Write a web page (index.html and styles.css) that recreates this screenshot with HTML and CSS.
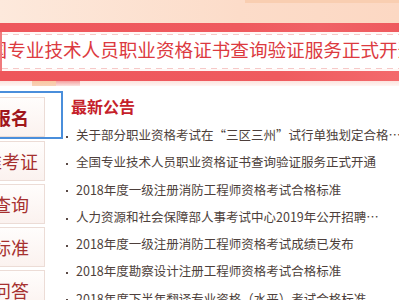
FILE: index.html
```html
<!DOCTYPE html>
<html lang="zh-CN">
<head>
<meta charset="utf-8">
<title>职业资格</title>
<link rel="stylesheet" href="styles.css">
</head>
<body>
<div class="banner">
  <div class="banner-top"></div>
  <div class="banner-band"></div>
  <div class="banner-strip">
    <div class="strip-inner">
      <div class="banner-title">全国专业技术人员职业资格证书查询验证服务正式开通</div>
    </div>
  </div>
  <div class="banner-band band-low"></div>
  <div class="banner-bottom"></div>
</div>
<div class="main">
  <div class="nav">
    <div class="focus">
      <div class="nav-box strong">报名</div>
    </div>
    <div class="nav-box first-after">准考证</div>
    <div class="nav-box">查询</div>
    <div class="nav-box">标准</div>
    <div class="nav-box">问答</div>
  </div>
  <div class="news">
    <h2 class="news-title">最新公告</h2>
    <ul class="news-list">
      <li>关于部分职业资格考试在“三区三州”试行单独划定合格…</li>
      <li>全国专业技术人员职业资格证书查询验证服务正式开通</li>
      <li>2018年度一级注册消防工程师资格考试合格标准</li>
      <li>人力资源和社会保障部人事考试中心2019年公开招聘…</li>
      <li>2018年度一级注册消防工程师资格考试成绩已发布</li>
      <li>2018年度勘察设计注册工程师资格考试合格标准</li>
      <li>2018年度下半年翻译专业资格（水平）考试合格标准</li>
    </ul>
  </div>
</div>
</body>
</html>
```

FILE: styles.css
```css
html, body {
  margin: 0;
  padding: 0;
  background: #ffffff;
}
body {
  width: 399px;
  height: 300px;
  overflow: hidden;
  font-family: "Noto Sans CJK SC", "Noto Sans", sans-serif;
}

/* Banner */
.banner {
  height: 86px;
  overflow: hidden;
}
.banner-top {
  height: 23px;
  background:
    linear-gradient(#f9ceb1, #f9ceb1) no-repeat right top / 154px 3px,
    linear-gradient(to right, #fde9dc, #fcdcc9 60%, #fcd8c3);
}
.banner-band {
  height: 9px;
  background: linear-gradient(to right, #ee575c, #ef5a5e 60%, #f06266 80%, #ee5a5e);
}
.band-low {
  height: 10px;
  background: linear-gradient(to right, #ee565b, #ef5b5f 70%, #f36a6c);
}
.banner-strip {
  height: 39px;
  box-sizing: border-box;
  padding: 2px 0;
  background: #fff8f6;
  border-left: 2px solid #f07a7c;
}
.strip-inner {
  height: 35px;
  box-sizing: border-box;
  padding-top: 1px;
  background:
    repeating-linear-gradient(to right, #f6c9c8 0 6px, transparent 6px 11px) no-repeat left top / 100% 1px,
    repeating-linear-gradient(to right, #f6c9c8 0 6px, transparent 6px 11px) no-repeat left bottom / 100% 1px,
    #ffffff;
  overflow: hidden;
}
.banner-title {
  margin-left: -32px;
  white-space: nowrap;
  font-size: 18.6px;
  line-height: 28px;
  color: #dc3a40;
}
.banner-bottom {
  height: 5px;
  background:
    linear-gradient(#f8c6a2, #f9d3b8) no-repeat 32px 0 / 24px 5px,
    linear-gradient(#f3a0a0, #fbe3df) no-repeat 56px 0 / 24px 5px,
    linear-gradient(to bottom, #fbe4df, #fff6f3);
}

/* Main */
.main {
  display: flex;
  align-items: flex-start;
}
.nav {
  margin-left: -23px;
  padding-top: 5px;
  display: flex;
  flex-direction: column;
  flex: none;
}
.focus {
  border: 2px solid #4a8edb;
  border-left: none;
  padding: 4px 16px 0 0;
}
.nav-box {
  width: 68px;
  height: 40px;
  box-sizing: border-box;
  border: 1px solid #ecdcd6;
  background: linear-gradient(to bottom, #fffdfc, #fbf2ef);
  display: flex;
  align-items: center;
  justify-content: center;
  font-size: 18px;
  color: #a6302f;
  margin-top: 3px;
}
.focus .nav-box {
  margin-top: 0;
}
.nav-box.first-after {
  margin-top: 2px;
}
.nav-box.strong {
  font-weight: bold;
  color: #a0161c;
}

.news {
  margin-left: 3px;
  padding-top: 10px;
  min-width: 0;
  flex: 1;
}
.news-title {
  margin: 0 0 5px 5px;
  font-size: 16px;
  line-height: 20px;
  font-weight: bold;
  color: #c5212a;
}
.news-list {
  list-style: none;
  margin: 0;
  padding: 0;
}
.news-list li {
  height: 27.3px;
  line-height: 27.3px;
  font-size: 12.5px;
  color: #4d3f3b;
  white-space: nowrap;
  overflow: hidden;
  display: flex;
  align-items: center;
}
.news-list li::before {
  content: "";
  width: 2px;
  height: 2px;
  background: #5a4a46;
  margin: 4px 8px 0 0;
  flex: none;
}
```
